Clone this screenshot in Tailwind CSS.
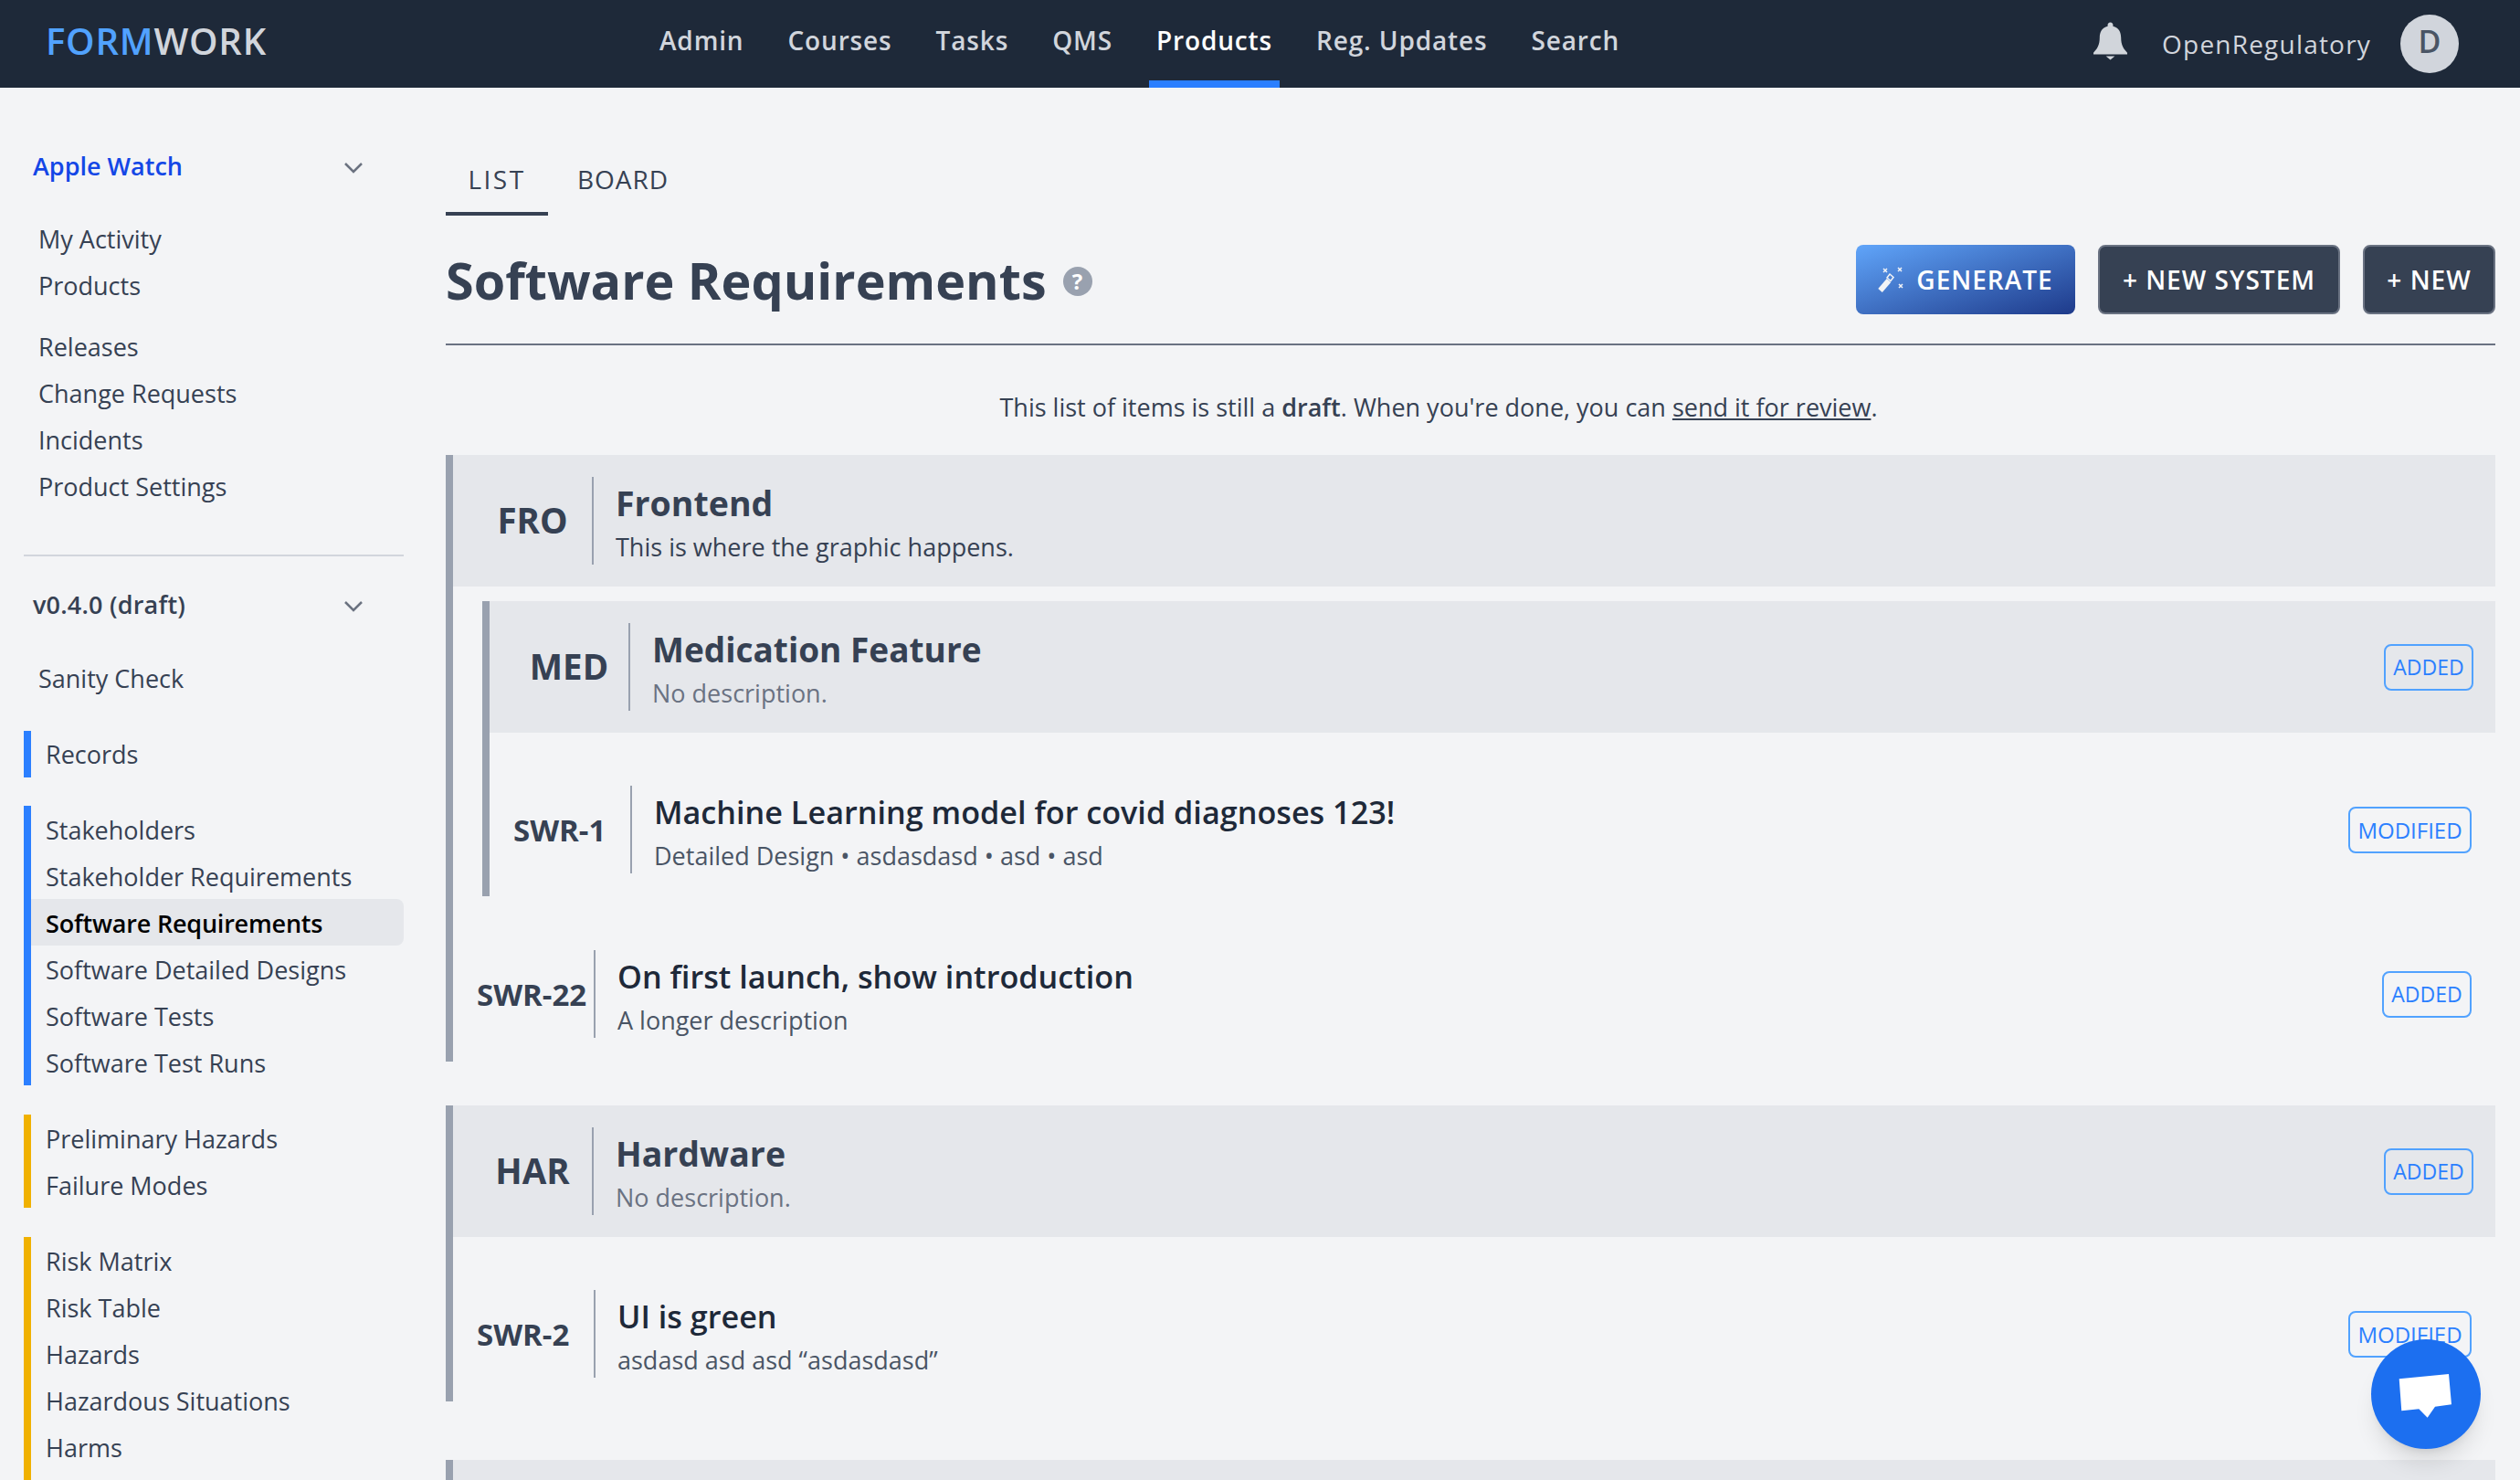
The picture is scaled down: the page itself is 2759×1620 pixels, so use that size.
<!DOCTYPE html>
<html lang="en">
<head>
  <meta charset="UTF-8" />
  <title>Formwork - Software Requirements</title>
  <script src="https://cdn.jsdelivr.net/npm/@tailwindcss/browser@4"></script>
</head>
<body class="bg-gray-100 h-screen overflow-hidden relative font-['Open_Sans','Noto_Sans',sans-serif] text-[27px] text-gray-700">

  <header class="h-[96px] bg-gray-800 flex items-center">
    <div class="w-[714px] pl-[50px] text-[40px] font-semibold tracking-[0.8px] leading-none pb-[6px] text-gray-300"><span class="text-blue-400">FORM</span>WORK</div>
    <nav class="flex h-full gap-[32px] text-[28px] text-gray-300 font-semibold tracking-[0.85px]">
      <a class="px-2 flex items-center border-b-[8px] border-transparent">Admin</a>
      <a class="px-2 flex items-center border-b-[8px] border-transparent">Courses</a>
      <a class="px-2 flex items-center border-b-[8px] border-transparent">Tasks</a>
      <a class="px-2 flex items-center border-b-[8px] border-transparent">QMS</a>
      <a class="px-2 flex items-center border-b-[8px] border-blue-500 text-white">Products</a>
      <a class="px-2 flex items-center border-b-[8px] border-transparent">Reg. Updates</a>
      <a class="px-2 flex items-center border-b-[8px] border-transparent">Search</a>
    </nav>
    <div class="ml-auto flex items-center pr-[67px]">
      <svg class="w-[37px] h-[42px] mb-[6px]" viewBox="0 0 38 42" fill="#d1d5db"><path d="M19 0c-2 0-3 1.500-3 3v1.200C9.500 5.600 7 11 7 17c0 9-3 13-7 17v2h38v-2c-4-4-7-8-7-17 0-6-2.500-11.400-9-12.800V3c0-1.500-1-3-3-3z"/><path d="M14 38h10l-5 4z"/></svg>
      <span class="ml-[38px] text-[28px] font-medium text-gray-300 tracking-[1.2px]">OpenRegulatory</span>
      <div class="ml-[32px] w-[64px] h-[64px] rounded-full bg-gray-300 flex items-center justify-center text-[34px] text-gray-600 font-semibold pb-[6px]">D</div>
    </div>
  </header>

  <div class="flex h-[1524px] overflow-hidden">
    <aside class="w-[488px] shrink-0 pl-[26px] pr-[46px] pt-[61px]">
      <div class="h-[51px] flex items-center justify-between pl-[10px] pr-[44px] text-blue-700 font-semibold">
        Apple Watch
        <svg class="w-[22px] h-[22px]" viewBox="0 0 22 22" fill="none" stroke="#6b7280" stroke-width="2.500"><path d="M2 7l9 9 9-9"/></svg>
      </div>
      <div class="mt-[29px] pl-[16px]">
        <div class="h-[51px] flex items-center">My Activity</div>
        <div class="h-[51px] flex items-center">Products</div>
      </div>
      <div class="mt-[16px] pl-[16px]">
        <div class="h-[51px] flex items-center">Releases</div>
        <div class="h-[51px] flex items-center">Change Requests</div>
        <div class="h-[51px] flex items-center">Incidents</div>
        <div class="h-[51px] flex items-center">Product Settings</div>
      </div>
      <div class="mt-[48px] border-t-2 border-gray-300"></div>
      <div class="mt-[28px] h-[51px] flex items-center justify-between pl-[10px] pr-[44px] font-semibold tracking-[0.2px]">
        v0.4.0 (draft)
        <svg class="w-[22px] h-[22px]" viewBox="0 0 22 22" fill="none" stroke="#6b7280" stroke-width="2.500"><path d="M2 7l9 9 9-9"/></svg>
      </div>
      <div class="mt-[30px] h-[51px] flex items-center pl-[16px]">Sanity Check</div>

      <div class="mt-[31px] border-l-8 border-blue-500">
        <div class="h-[51px] flex items-center pl-4 pt-[2px]">Records</div>
      </div>
      <div class="mt-[31px] border-l-8 border-blue-500">
        <div class="h-[51px] flex items-center pl-4 pt-[3px]">Stakeholders</div>
        <div class="h-[51px] flex items-center pl-4 pt-[3px]">Stakeholder Requirements</div>
        <div class="h-[51px] flex items-center pl-4 pt-[3px] bg-gray-200 rounded-r-lg font-semibold tracking-[-0.2px] text-black">Software Requirements</div>
        <div class="h-[51px] flex items-center pl-4 pt-[3px]">Software Detailed Designs</div>
        <div class="h-[51px] flex items-center pl-4 pt-[3px]">Software Tests</div>
        <div class="h-[51px] flex items-center pl-4 pt-[3px]">Software Test Runs</div>
      </div>
      <div class="mt-[32px] border-l-8 border-yellow-500">
        <div class="h-[51px] flex items-center pl-4 pt-[3px]">Preliminary Hazards</div>
        <div class="h-[51px] flex items-center pl-4 pt-[3px]">Failure Modes</div>
      </div>
      <div class="mt-[32px] border-l-8 border-yellow-500">
        <div class="h-[51px] flex items-center pl-4 pt-[3px]">Risk Matrix</div>
        <div class="h-[51px] flex items-center pl-4 pt-[3px]">Risk Table</div>
        <div class="h-[51px] flex items-center pl-4 pt-[3px]">Hazards</div>
        <div class="h-[51px] flex items-center pl-4 pt-[3px]">Hazardous Situations</div>
        <div class="h-[51px] flex items-center pl-4 pt-[3px]">Harms</div>
        <div class="h-[51px]"></div>
      </div>
    </aside>

    <main class="flex-1 min-w-0 pr-[27px] pt-[60px]">
      <div class="flex text-[28px]">
        <a class="w-[112px] h-[80px] flex items-center justify-center pt-[4px] border-b-4 border-gray-700 font-medium tracking-[2.5px]">LIST</a>
        <a class="px-6 ml-2 h-[80px] flex items-center pt-[4px] border-b-4 border-transparent font-medium tracking-[1px]">BOARD</a>
      </div>

      <div class="flex items-center pt-[32px] pb-[32px] border-b-2 border-gray-500">
        <h1 class="text-[55.700px] font-bold leading-[76px]">Software Requirements</h1>
        <div class="ml-[18px] mt-[4px] w-[32px] h-[32px] rounded-full bg-gray-400 text-white text-[24px] font-bold flex items-center justify-center">?</div>
        <div class="ml-auto flex gap-[25px] text-[28px] text-white font-semibold tracking-[1px]">
          <button class="w-[240px] h-[76px] rounded-lg bg-[linear-gradient(to_bottom_right,#60a5fa,#1e3a8a)] flex items-center justify-center gap-[12px]">
            <svg class="w-[30px] h-[28px]" viewBox="0 0 30 28" fill="none" stroke="#f3f4f6"><path d="M2.500 26L12 15" stroke-width="6"/><path d="M13 8l4 3.500-3 4-4-3.500z" stroke-width="1.500"/><path d="M6 2l4 4M10 2L6 6M22 1l4 4M26 1l-4 4M23 19l4 4M27 19l-4 4" stroke-width="1.500"/></svg>
            GENERATE
          </button>
          <button class="w-[265px] h-[76px] rounded-lg bg-gray-700 border-2 border-gray-500">+ NEW SYSTEM</button>
          <button class="w-[145px] h-[76px] rounded-lg bg-gray-700 border-2 border-gray-500">+ NEW</button>
        </div>
      </div>

      <p class="mt-[48px] mb-[32px] pr-[70px] leading-[40px] text-center text-gray-700">This list of items is still a <b class="font-semibold">draft</b>. When you're done, you can <u>send it for review</u>.</p>

      <section class="border-l-8 border-gray-400 mb-[48px]">
        <div class="h-[144px] bg-gray-200 flex items-center pr-[24px]">
          <div class="w-[152px] pl-[22px] text-center text-[38.500px] font-bold">FRO</div>
          <div class="w-[2px] h-[96px] bg-gray-400"></div>
          <div class="pl-[24px] self-start mt-[29px]">
            <div class="h-[48px] leading-[48px] text-[37.500px] font-bold">Frontend</div>
            <div class="h-[48px] leading-[48px] text-gray-700">This is where the graphic happens.</div>
          </div>
        </div>

        <section class="ml-[32px] mt-[16px] border-l-8 border-gray-400">
          <div class="h-[144px] bg-gray-200 flex items-center pr-[24px]">
            <div class="w-[152px] pl-[22px] text-center text-[38.500px] font-bold">MED</div>
            <div class="w-[2px] h-[96px] bg-gray-400"></div>
            <div class="pl-[24px] self-start mt-[29px]">
              <div class="h-[48px] leading-[48px] text-[37px] font-bold">Medication Feature</div>
              <div class="h-[48px] leading-[48px] text-gray-500">No description.</div>
            </div>
            <span class="ml-auto w-[98px] h-[51px] border-2 border-blue-400 rounded-lg text-blue-500 text-[23px] flex items-center justify-center">ADDED</span>
          </div>
          <div class="h-[179px] pt-[58px] pl-[26px] pr-[26px] flex items-start">
            <div class="w-[128px] h-[96px] flex items-center pt-[2px] text-[33px] font-bold">SWR-1</div>
            <div class="w-[2px] h-[96px] bg-gray-400"></div>
            <div class="pl-[24px] mt-[5px]">
              <div class="h-[48px] leading-[48px] text-[34.200px] font-semibold text-gray-800">Machine Learning model for covid diagnoses 123!</div>
              <div class="h-[48px] leading-[48px] text-gray-600">Detailed Design • asdasdasd • asd • asd</div>
            </div>
            <span class="ml-auto mt-[23px] w-[135px] h-[51px] border-2 border-blue-400 rounded-lg text-blue-500 text-[24px] flex items-center justify-center">MODIFIED</span>
          </div>
        </section>

        <div class="h-[181px] pt-[59px] pl-[26px] pr-[26px] flex items-start">
          <div class="w-[128px] h-[96px] flex items-center pt-[2px] text-[33px] font-bold">SWR-22</div>
          <div class="w-[2px] h-[96px] bg-gray-400"></div>
          <div class="pl-[24px] mt-[5px]">
            <div class="h-[48px] leading-[48px] text-[34.200px] font-semibold text-gray-800">On first launch, show introduction</div>
            <div class="h-[48px] leading-[48px] text-gray-600">A longer description</div>
          </div>
          <span class="ml-auto mt-[23px] w-[98px] h-[51px] border-2 border-blue-400 rounded-lg text-blue-500 text-[23px] flex items-center justify-center">ADDED</span>
        </div>
      </section>

      <section class="border-l-8 border-gray-400 mb-[64px]">
        <div class="h-[144px] bg-gray-200 flex items-center pr-[24px]">
          <div class="w-[152px] pl-[22px] text-center text-[38.500px] font-bold">HAR</div>
          <div class="w-[2px] h-[96px] bg-gray-400"></div>
          <div class="pl-[24px] self-start mt-[29px]">
            <div class="h-[48px] leading-[48px] text-[37.500px] font-bold">Hardware</div>
            <div class="h-[48px] leading-[48px] text-gray-500">No description.</div>
          </div>
          <span class="ml-auto w-[98px] h-[51px] border-2 border-blue-400 rounded-lg text-blue-500 text-[23px] flex items-center justify-center">ADDED</span>
        </div>
        <div class="h-[180px] pt-[58px] pl-[26px] pr-[26px] flex items-start">
          <div class="w-[128px] h-[96px] flex items-center pt-[2px] text-[33px] font-bold">SWR-2</div>
          <div class="w-[2px] h-[96px] bg-gray-400"></div>
          <div class="pl-[24px] mt-[5px]">
            <div class="h-[48px] leading-[48px] text-[34.200px] font-semibold text-gray-800">UI is green</div>
            <div class="h-[48px] leading-[48px] text-gray-600">asdasd asd asd “asdasdasd”</div>
          </div>
          <span class="ml-auto mt-[23px] w-[135px] h-[51px] border-2 border-blue-400 rounded-lg text-blue-500 text-[24px] flex items-center justify-center">MODIFIED</span>
        </div>
      </section>

      <div class="h-[144px] border-l-8 border-gray-400 bg-gray-200"></div>
    </main>
  </div>

  <div class="absolute right-[43px] bottom-[34px] w-[120px] h-[120px] rounded-full bg-[#1c6ff0] shadow-xl">
    <svg class="w-[120px] h-[120px]" viewBox="0 0 120 120" fill="#fff"><path d="M30.700 43.300L85 38l3 33.300-18 2.400-8.300 12-9.400-9.400-19 2z"/></svg>
  </div>
</body>
</html>
